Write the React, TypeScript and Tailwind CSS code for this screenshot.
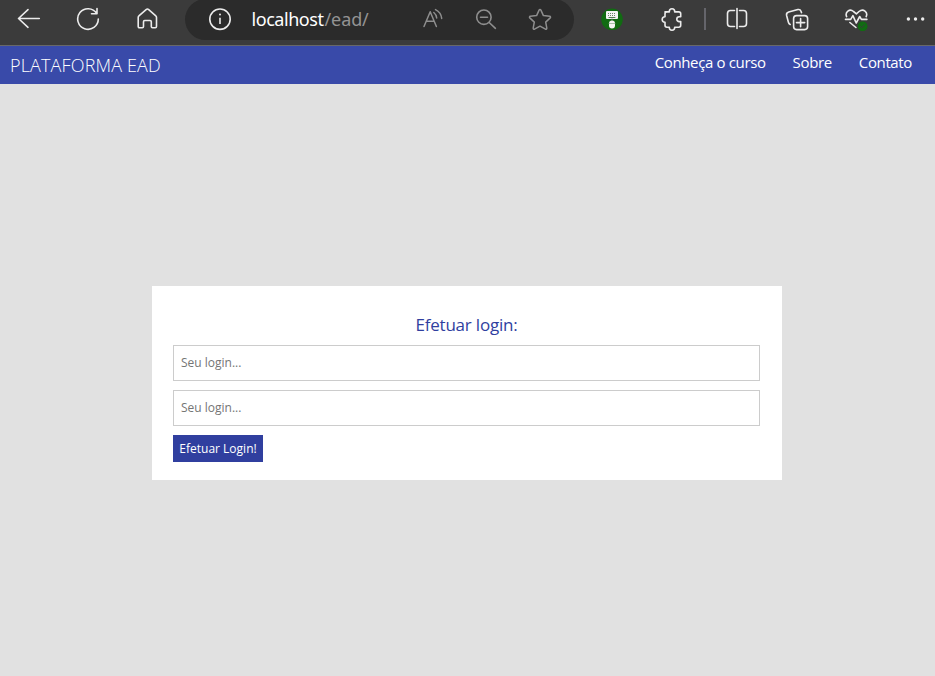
import type { ReactNode } from "react";

function Icon({ className = "", children }: { className?: string; children: ReactNode }) {
  return (
    <svg
      viewBox="0 0 24 24"
      fill="none"
      stroke="currentColor"
      strokeWidth="1.6"
      strokeLinecap="round"
      strokeLinejoin="round"
      className={`h-6 w-6 shrink-0 ${className}`}
    >
      {children}
    </svg>
  );
}

function BrowserBar() {
  return (
    <div className="flex h-[46px] items-start overflow-hidden border-b border-[#686868] bg-[#3b3b3b] pl-[17px] text-[#ececec]">
      <Icon className="mt-[7px]">
        <path d="M22.3 11.5H1.5M11 2.6 1.5 11.5l9.5 8.8" />
      </Icon>
      <Icon className="mt-[7px] ml-[35px]">
        <path d="M22.3 12A10.3 10.3 0 1 1 20.7 6.5M21 1.5v5.2h-5.5" />
      </Icon>
      <Icon className="mt-[7px] ml-[35px]">
        <path d="M3.2 19.5V10.4c0-.6.2-1.1.7-1.5l7.2-6.3c.8-.7 1.800-.7 2.600 0L20.800 8.900c.5.400.7.900.7 1.500v9.100c0 .7-.5 1.200-1.200 1.200h-2.800c-.7 0-1.200-.5-1.200-1.200v-4.800c0-.7-.5-1.200-1.200-1.200H9.700c-.7 0-1.200.5-1.200 1.200v4.800c0 .7-.5 1.200-1.200 1.200H4.400c-.7 0-1.200-.5-1.200-1.200Z" />
      </Icon>

      <div className="-mt-px ml-[26px] flex h-[41px] w-[389px] shrink-0 items-start rounded-full bg-[#2b2b2b] pt-2 pl-[23px]">
        <Icon>
          <circle cx="12" cy="12.2" r="10.2" />
          <path d="M12 10.800v6.200" strokeLinecap="butt" />
          <circle cx="12" cy="7.600" r="1" fill="currentColor" stroke="none" />
        </Icon>
        <div className="ml-[19.5px] w-[168.5px] text-[18px] leading-6 tracking-[-0.45px] whitespace-nowrap text-white [font-family:'Noto_Sans','Open_Sans',sans-serif]">
          localhost<span className="ml-[1px] tracking-[-0.1px] text-[#939393]">/ead/</span>
        </div>
        <Icon className="text-[#8e8e8e]">
          <path d="M4 19.500 10.200 4.800 16.400 19.500M6.200 14.200h8M13.800 5.500c1.800 1.400 2.700 3.300 2.900 5.500M15.500 2.600c3.800 1.900 5.800 5 6.200 8.800" strokeWidth="1.500" />
        </Icon>
        <Icon className="ml-[30px] text-[#8e8e8e]">
          <circle cx="9.900" cy="10.200" r="7.200" />
          <path d="M6.500 10.200h7M15.200 15.500l6.200 5.800" />
        </Icon>
        <Icon className="ml-[30px] text-[#8e8e8e]">
          <path d="M11.200 2.900c.3-.7 1.300-.7 1.600 0l2.600 5.700 6.300.7c.8.100 1.100 1 .5 1.600L17.700 15.100l1.100 6.100c.1.800-.6 1.300-1.300 1L12 19.200l-5.500 3c-.7.300-1.400-.2-1.300-1l1.100-6.100L1.800 10.900c-.6-.6-.3-1.500.5-1.600l6.300-.7Z" strokeWidth="1.500" />
        </Icon>
      </div>

      <Icon className="mt-[7px] ml-[26px]">
        <circle cx="12" cy="12.300" r="10.800" fill="#116b12" stroke="none" />
        <rect x="6" y="4" width="12" height="8" rx="1" fill="#f4f4f4" stroke="none" />
        <path d="M8 6.500h8M8 8.500h8" stroke="#688668" strokeWidth="1" strokeDasharray="1 1" strokeLinecap="butt" />
        <path d="M9 10.500h6M12 12v2" stroke="#557b55" strokeWidth="1" />
        <rect x="9" y="13.500" width="6" height="8" rx="3" fill="#f4f4f4" stroke="none" />
        <path d="M9 16.500h6" stroke="#87aa87" strokeWidth=".7" />
      </Icon>
      <Icon className="mt-[7px] ml-9">
        <path d="M5 4.900h4.300v-.4a2.700 2.700 0 0 1 5.400 0v.4h4.100c1.100 0 1.900.8 1.900 1.900v3h-1.500a2.400 2.400 0 0 0 0 4.800h1.500v3.700c0 1.100-.8 1.900-1.900 1.900h-4.100v.3a2.700 2.700 0 0 1-5.400 0v-.3H6.900c-1.100 0-1.900-.8-1.900-1.900v-3.100h-.1a2.700 2.700 0 0 1 0-5.400H5V6.800c0-1.100.8-1.900 1.900-1.900" />
      </Icon>
      <div className="mt-2 ml-5 h-[22px] w-[2px] shrink-0 bg-[#65656b]" />
      <Icon className="mt-[7px] ml-[19px]">
        <path d="M9.500 3.500h-4a3 3 0 0 0-3 3v10a3 3 0 0 0 3 3h4M14.500 3.500h4a3 3 0 0 1 3 3v10a3 3 0 0 1-3 3h-4M12 1.500v20" />
      </Icon>
      <Icon className="mt-[7px] ml-9">
        <rect x="8.600" y="8.600" width="14" height="14" rx="3" />
        <path d="M15.600 11.500v8.200M11.500 15.600h8.200M5.200 17.400c-.9-.4-1.500-1.100-1.800-2.200L1.600 8.500c-.4-1.700.4-2.900 2.100-3.400l9.200-2.500c1.500-.4 2.500.2 3.100 1.700l.5 1.300" />
      </Icon>
      <Icon className="mt-[7px] ml-[35px]">
        <path d="M2.600 9.600C.7 5.200 5.700 1.200 9.500 4.500l2.900 2.300L15 4.500c4.300-3.500 9.200.6 7.200 5.100M1.500 12.400h5.200l2.200-3.800 3.300 7.400 3.500-6.500 1.700 2.900h5.500M5.900 15.500l6 5" />
        <circle cx="18.600" cy="19.300" r="4.900" fill="#116b12" stroke="none" />
        <path d="m16.500 19.500 1.300 1.100 3-2.900" stroke="#3b3b3b" strokeWidth="1" />
      </Icon>
      <Icon className="mt-[7px] ml-[35px]">
        <g fill="currentColor" stroke="none">
          <circle cx="5.400" cy="12" r="1.700" />
          <circle cx="12.500" cy="12" r="1.700" />
          <circle cx="19.700" cy="12" r="1.700" />
        </g>
      </Icon>
    </div>
  );
}

const inputClass =
  "block h-9 w-full border border-[#cccccc] bg-white px-[7px] pb-[1px] text-[12px] text-black outline-none placeholder:text-[#757575]";

export default function App() {
  return (
    <div className="flex h-[676px] w-[935px] flex-col overflow-hidden bg-[#e1e1e1] [font-family:'Open_Sans',sans-serif]">
      <BrowserBar />
      <header className="flex h-[38px] shrink-0 items-start justify-between bg-[#394aa9] pr-[23px] pl-[10px] text-white">
        <h1 className="pt-[7px] text-[18px] leading-6 font-light tracking-[0.15px] whitespace-nowrap">PLATAFORMA EAD</h1>
        <nav className="flex gap-[27px] pt-[6px] text-[15px] leading-5 tracking-[-0.36px] whitespace-nowrap">
          <a href="#curso">Conheça o curso</a>
          <a href="#sobre">Sobre</a>
          <a href="#contato">Contato</a>
        </nav>
      </header>
      <main className="pt-[202px] pl-[152px]">
        <form onSubmit={(e) => e.preventDefault()} className="h-[194px] w-[630px] bg-white px-[21px] pt-[27px] pr-[22px]">
          <h2 className="h-8 text-center text-[17px] leading-6 tracking-[-0.2px] text-[#303f9f]">Efetuar login:</h2>
          <input className={inputClass} placeholder="Seu login..." />
          <input className={`${inputClass} mt-[9px]`} placeholder="Seu login..." />
          <button className="mt-[9px] block h-[27px] w-[90px] bg-[#303f9f] text-[12px] leading-[27px] whitespace-nowrap text-white">
            Efetuar Login!
          </button>
        </form>
      </main>
    </div>
  );
}
